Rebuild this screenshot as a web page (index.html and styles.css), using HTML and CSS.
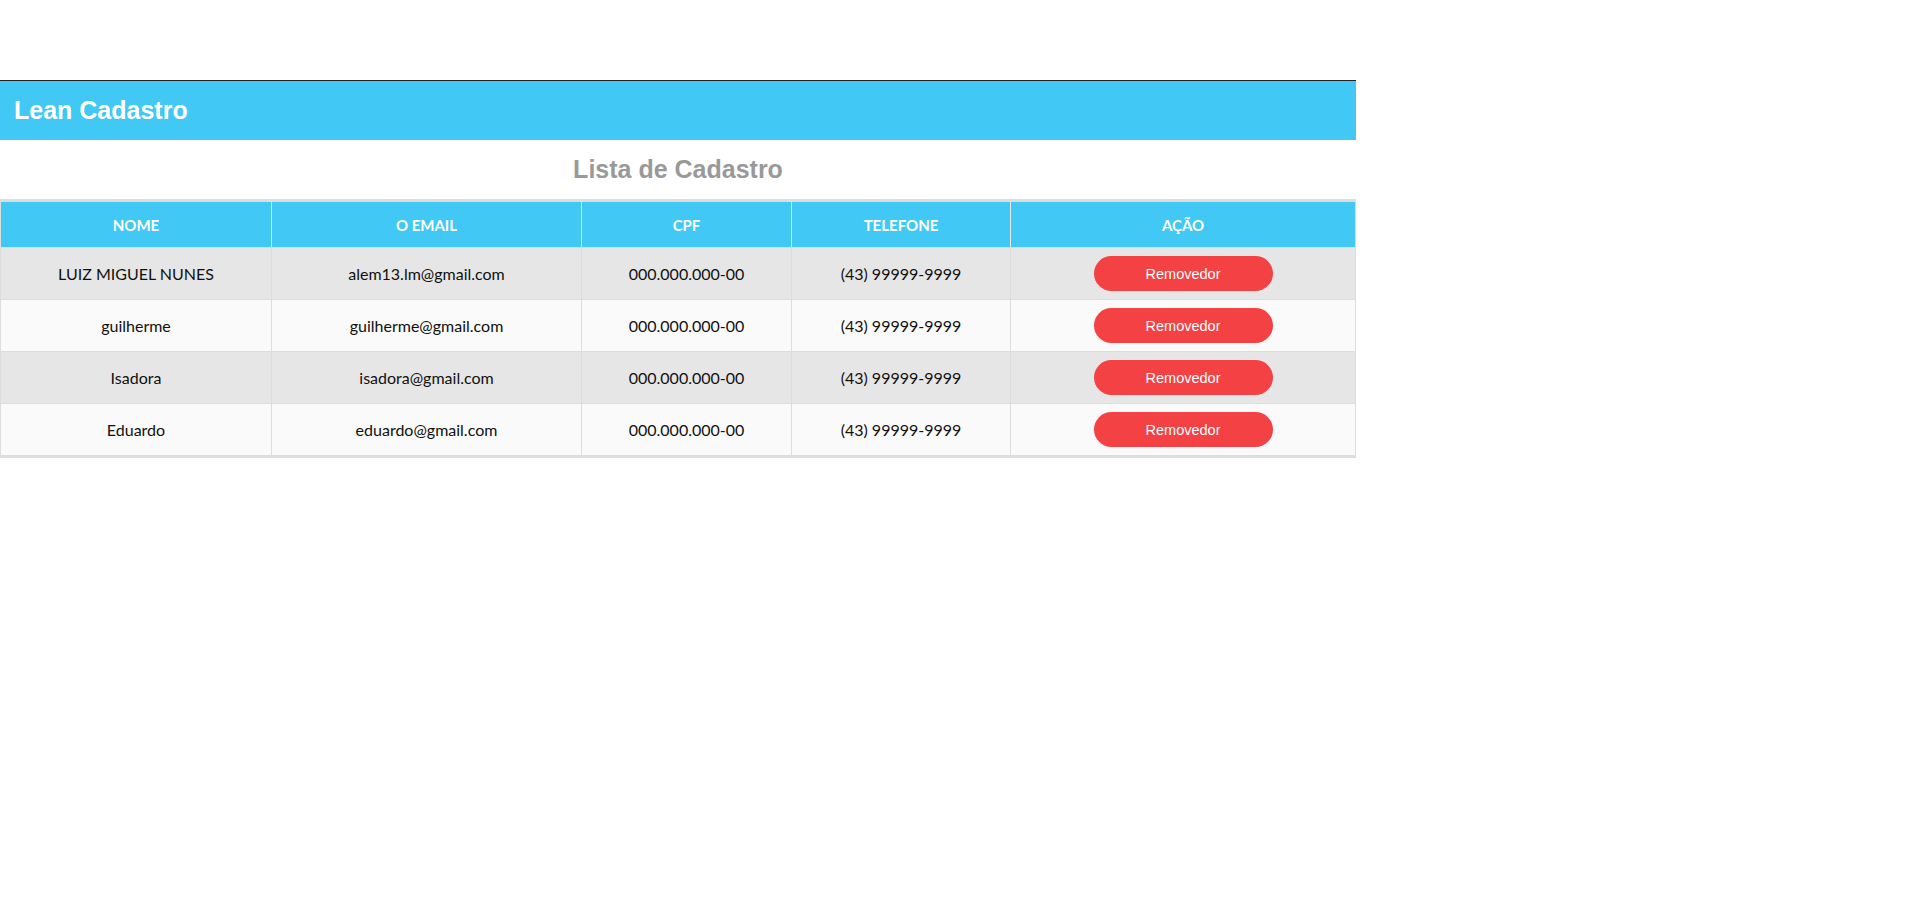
FILE: index.html
```html
<!DOCTYPE html>
<html lang="pt-BR">
<head>
<meta charset="utf-8">
<title>Lean Cadastro</title>
<link rel="stylesheet" href="styles.css">
</head>
<body>
<div class="page">
  <header class="topbar">
    <h1 class="brand">Lean Cadastro</h1>
  </header>
  <h2 class="list-title">Lista de Cadastro</h2>
  <table class="grid">
    <colgroup>
      <col class="c-nome">
      <col class="c-email">
      <col class="c-cpf">
      <col class="c-tel">
      <col class="c-acao">
    </colgroup>
    <thead>
      <tr>
        <th>Nome</th>
        <th>O Email</th>
        <th>CPF</th>
        <th>Telefone</th>
        <th>Ação</th>
      </tr>
    </thead>
    <tbody>
      <tr>
        <td>LUIZ MIGUEL NUNES</td>
        <td>alem13.lm@gmail.com</td>
        <td>000.000.000-00</td>
        <td>(43) 99999-9999</td>
        <td><button class="btn-remove" type="button">Removedor</button></td>
      </tr>
      <tr>
        <td>guilherme</td>
        <td>guilherme@gmail.com</td>
        <td>000.000.000-00</td>
        <td>(43) 99999-9999</td>
        <td><button class="btn-remove" type="button">Removedor</button></td>
      </tr>
      <tr>
        <td>Isadora</td>
        <td>isadora@gmail.com</td>
        <td>000.000.000-00</td>
        <td>(43) 99999-9999</td>
        <td><button class="btn-remove" type="button">Removedor</button></td>
      </tr>
      <tr>
        <td>Eduardo</td>
        <td>eduardo@gmail.com</td>
        <td>000.000.000-00</td>
        <td>(43) 99999-9999</td>
        <td><button class="btn-remove" type="button">Removedor</button></td>
      </tr>
    </tbody>
  </table>
</div>
</body>
</html>
```
FILE: styles.css
```css
html, body {
  margin: 0;
  padding: 0;
  background: #ffffff;
}

.page {
  width: 1356px;
  margin-top: 80px;
}

.topbar {
  height: 59px;
  border-top: 1px solid #222222;
  background: #41c8f4;
  display: flex;
  align-items: center;
  padding-left: 14px;
}

.brand {
  margin: 0;
  font-family: "Liberation Sans", Arial, sans-serif;
  font-weight: bold;
  font-size: 25px;
  color: #ffffff;
}

.list-title {
  margin: 0;
  height: 59px;
  line-height: 59px;
  text-align: center;
  font-family: "Liberation Sans", Arial, sans-serif;
  font-weight: bold;
  font-size: 25px;
  color: #999999;
}

.grid {
  width: 1356px;
  table-layout: fixed;
  border-collapse: separate;
  border-spacing: 0;
  border-style: solid;
  border-color: #dddddd;
  border-width: 3px 1px;
  font-family: Lato, "Open Sans", sans-serif;
}

.c-nome { width: 271px; }
.c-email { width: 310px; }
.c-cpf { width: 210px; }
.c-tel { width: 219px; }
.c-acao { width: 344px; }

.grid th,
.grid td {
  box-sizing: border-box;
  padding: 0;
  text-align: center;
  vertical-align: middle;
  border-right: 1px solid #dddddd;
}

.grid th:last-child,
.grid td:last-child {
  border-right: none;
}

.grid th {
  height: 45px;
  background: #41c8f4;
  color: #ffffff;
  font-weight: bold;
  font-size: 15px;
  text-transform: uppercase;
  border-right-color: #e6e6e6;
}

.grid td {
  height: 52px;
  border-top: 1px solid #dddddd;
  font-size: 16px;
  color: #111111;
}

.grid tbody tr:nth-child(odd) {
  background: #e6e6e6;
}

.grid tbody tr:nth-child(even) {
  background: #fafafa;
}

.btn-remove {
  width: 179px;
  height: 35px;
  border: none;
  border-radius: 18px;
  background: #f44144;
  color: #ffffff;
  font-family: "Liberation Sans", Arial, sans-serif;
  font-size: 14.5px;
  cursor: pointer;
}
```
